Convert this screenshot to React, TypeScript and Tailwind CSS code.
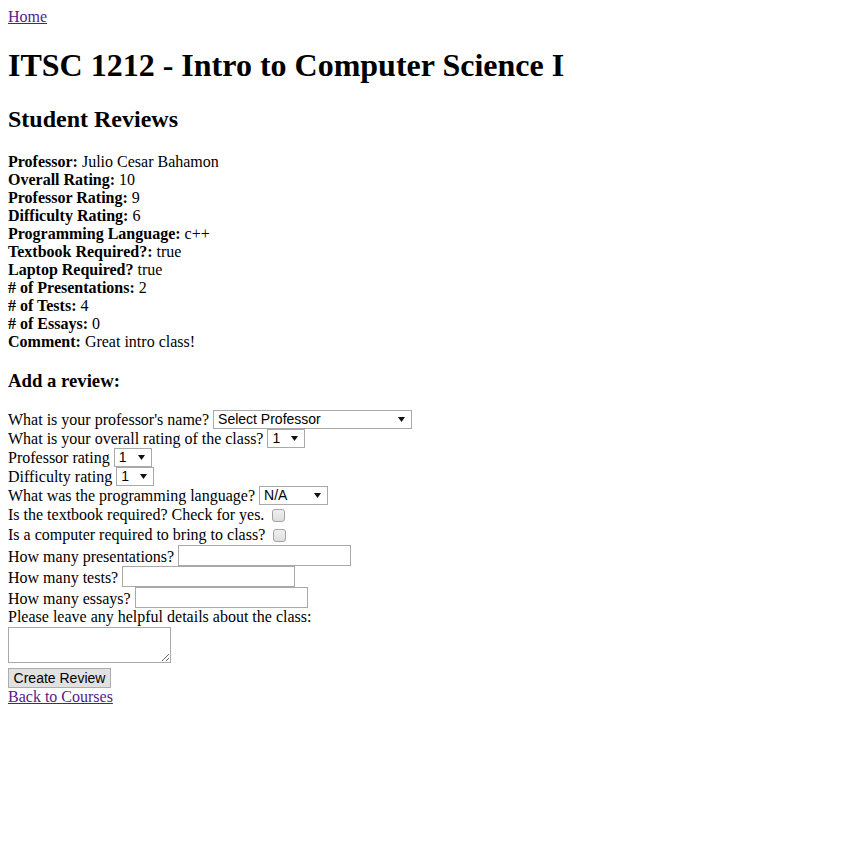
import React from 'react';

const Sel: React.FC<{ value: string; width: string; options: string[] }> = ({ value, width, options }) => (
  <span className={`relative inline-block ${width} h-[19px] ml-[4px]`}>
    <select
      defaultValue={value}
      className="appearance-none w-full h-full border border-[#a9a9a9] bg-white pl-[4px] pr-[16px] font-['Liberation_Sans',Arial,sans-serif] text-[14px] leading-[17px] text-black"
    >
      {options.map((o) => (
        <option key={o}>{o}</option>
      ))}
    </select>
    <svg className="pointer-events-none absolute right-[7px] top-[7px]" width="7" height="5" viewBox="0 0 7 5">
      <polygon points="0,0 7,0 3.5,5" fill="#111" />
    </svg>
  </span>
);

const Check: React.FC = () => (
  <input
    type="checkbox"
    className="appearance-none inline-block w-[13px] h-[13px] ml-[8px] mr-[3px] rounded-[3px] border border-[#a3a3a3] bg-gradient-to-b from-[#f0f0f0] to-[#dedede]"
  />
);

const TextIn: React.FC = () => (
  <input type="text" className="inline-block w-[173px] h-[21px] ml-[4px] border border-[#a9a9a9] bg-white" />
);

const reviewRows: [string, string][] = [
  ['Professor:', 'Julio Cesar Bahamon'],
  ['Overall Rating:', '10'],
  ['Professor Rating:', '9'],
  ['Difficulty Rating:', '6'],
  ['Programming Language:', 'c++'],
  ['Textbook Required?:', 'true'],
  ['Laptop Required?', 'true'],
  ['# of Presentations:', '2'],
  ['# of Tests:', '4'],
  ['# of Essays:', '0'],
  ['Comment:', 'Great intro class!'],
];

export default function App() {
  const ratings = ['1', '2', '3', '4', '5', '6', '7', '8', '9', '10'];

  return (
    <div className="m-2 font-['Liberation_Serif','Times_New_Roman',serif] text-[16px] leading-[normal] text-black">
      <a href="#" className="underline text-[#551a8b]">Home</a>

      <h1 className="text-[32px] font-bold my-[21.44px]">ITSC 1212 - Intro to Computer Science I</h1>
      <h2 className="text-[24px] font-bold my-[19.92px]">Student Reviews</h2>

      <div>
        {reviewRows.map(([k, v]) => (
          <div key={k} className="h-[18px] leading-[18px]">
            <b>{k}</b> {v}
          </div>
        ))}
      </div>

      <h3 className="text-[18.72px] font-bold my-[18.72px]">Add a review:</h3>

      <form>
        <div className="flex items-center h-[19px]">
          What is your professor's name?
          <Sel value="Select Professor" width="w-[199px]" options={['Select Professor', 'Julio Cesar Bahamon']} />
        </div>
        <div className="flex items-center h-[19px]">
          What is your overall rating of the class?
          <Sel value="1" width="w-[38px]" options={ratings} />
        </div>
        <div className="flex items-center h-[19px]">
          Professor rating
          <Sel value="1" width="w-[38px]" options={ratings} />
        </div>
        <div className="flex items-center h-[19px]">
          Difficulty rating
          <Sel value="1" width="w-[38px]" options={ratings} />
        </div>
        <div className="flex items-center h-[19px]">
          What was the programming language?
          <Sel value="N/A" width="w-[69px]" options={['N/A', 'java', 'python', 'c++']} />
        </div>
        <div className="flex items-center h-[20px]">
          Is the textbook required? Check for yes.
          <Check />
        </div>
        <div className="flex items-center h-[20px]">
          Is a computer required to bring to class?
          <Check />
        </div>
        <div className="flex items-center h-[21px]">
          <span className="pt-[2px]">How many presentations?</span>
          <TextIn />
        </div>
        <div className="flex items-center h-[21px]">
          <span className="pt-[2px]">How many tests?</span>
          <TextIn />
        </div>
        <div className="flex items-center h-[21px]">
          <span className="pt-[2px]">How many essays?</span>
          <TextIn />
        </div>
        <div className="h-[18.5px] leading-[18.5px]">Please leave any helpful details about the class:</div>
        <div className="h-[40px]">
          <textarea className="block w-[163px] h-[36px] border border-[#a9a9a9] bg-white resize" />
        </div>
        <div className="h-[21px] pt-[1px]">
          <button
            type="button"
            className="block w-[103px] h-[20px] border border-[#adadad] bg-[#e1e1e1] font-['Liberation_Sans',Arial,sans-serif] text-[14px] leading-[16px] text-black"
          >
            Create Review
          </button>
        </div>
      </form>
      <a href="#" className="underline text-[#551a8b]">Back to Courses</a>
    </div>
  );
}
